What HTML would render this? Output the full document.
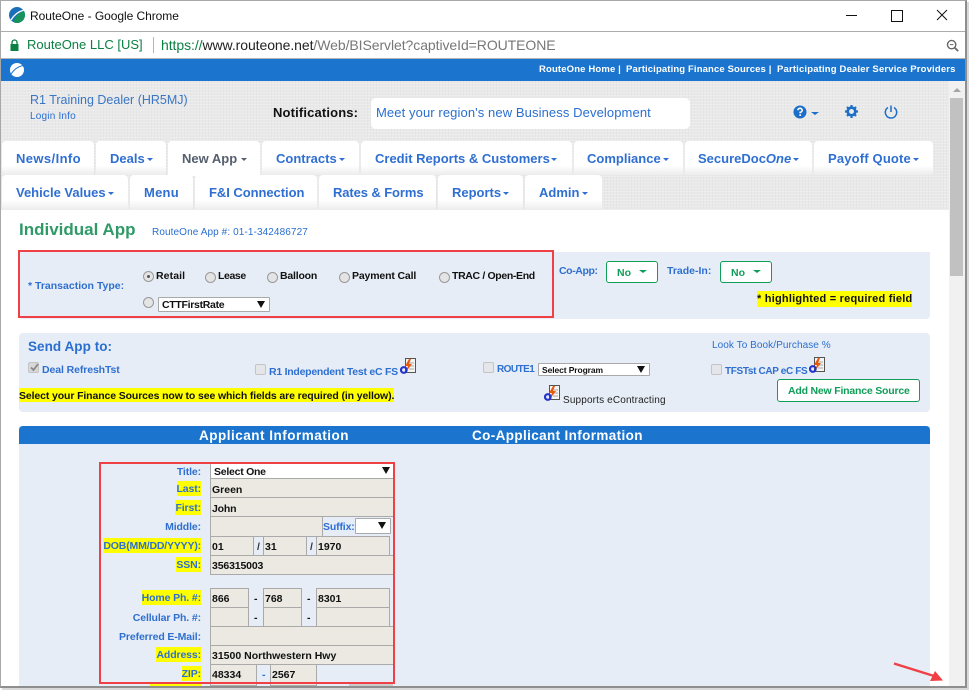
<!DOCTYPE html>
<html><head><meta charset="utf-8"><title>RouteOne</title>
<style>
html,body{margin:0;padding:0;background:#fff;}
body{width:973px;height:694px;position:relative;overflow:hidden;font-family:"Liberation Sans",sans-serif;}
div,span.a,svg{position:absolute;}
.t{position:absolute;white-space:nowrap;line-height:16px;height:16px;}
.tab{background:linear-gradient(#fff 0,#fff 72%,#ececec 100%);border-radius:4px 4px 0 0;}
.tl{position:absolute;white-space:nowrap;font:bold 13px/16px "Liberation Sans",sans-serif;color:#2f6fd2;}
.car{position:absolute;width:0;height:0;border-left:3px solid transparent;border-right:3px solid transparent;border-top:3px solid currentColor;}
.b{font-weight:bold;font-size:10.5px;color:#111;letter-spacing:-.2px;}
.lb{font-weight:bold;font-size:10.5px;color:#2e6fd0;letter-spacing:-.12px;}
.y{background:#ff0;height:15px!important;line-height:17px!important;}
.i{background:#ebe9e2;border:1px solid #aaa;box-sizing:border-box;}
.v{position:absolute;white-space:nowrap;font:bold 10.5px/16px "Liberation Sans",sans-serif;color:#111;}
.r{width:11px;height:11px;border-radius:50%;background:#e4e4e4;border:1px solid #999;box-sizing:border-box;}
.c{width:11px;height:11px;border-radius:2px;background:#e4e6ea;border:1px solid #c4c4c4;box-sizing:border-box;}
.s{background:#fff;border:1px solid #a9a9a9;box-sizing:border-box;border-radius:1px;}
.ar{position:absolute;width:0;height:0;border-left:4px solid transparent;border-right:4px solid transparent;border-top:7px solid #111;}
</style></head><body>

<!-- window chrome -->
<div style="left:2px;top:2px;width:967px;height:688px;background:#d9d9d9;"></div>
<div style="left:0;top:0;width:967px;height:688px;border:1px solid #a8a8a8;border-width:1px 2px 2px 1px;border-right-color:#8e8e8e;border-bottom-color:#8e8e8e;box-sizing:border-box;background:#fff;"></div>
<div style="left:1px;top:31px;width:964px;height:1px;background:#acacac;"></div>
<div style="left:1px;top:58px;width:964px;height:1px;background:#b4b4b4;"></div>

<svg style="left:9px;top:7px" width="16" height="16" viewBox="0 0 16 16"><circle cx="8" cy="8" r="8" fill="#1a6fb8"/><path d="M8 16A8 8 0 0 0 16 8C16 6.5 15.5 5 15 4C11 5 6 9 4.5 15C5.5 15.7 6.8 16 8 16Z" fill="#17935a"/><path d="M2 13C5 8 9 4.5 14.5 3.2" stroke="#fff" stroke-width="1.3" fill="none"/></svg>
<span class="t" style="left:30px;top:8px;font-size:12px;color:#111;letter-spacing:-.05px;">RouteOne - Google Chrome</span>

<div style="left:846px;top:15px;width:11px;height:1px;background:#111;"></div>
<div style="left:891px;top:10px;width:10px;height:10px;border:1px solid #111;"></div>
<svg style="left:936px;top:9px" width="12" height="12" viewBox="0 0 12 12"><path d="M1 1L11 11M11 1L1 11" stroke="#111" stroke-width="1" fill="none"/></svg>

<svg style="left:10px;top:39px" width="9" height="12" viewBox="0 0 9 12"><rect x="0.5" y="5" width="8" height="7" fill="#0b8043"/><path d="M2 5.5V3.5A2.5 2.5 0 0 1 7 3.5V5.5" stroke="#0b8043" stroke-width="1.3" fill="none"/></svg>
<span class="t" style="left:27px;top:37px;font-size:13px;color:#0b8043;">RouteOne LLC [US]</span>
<div style="left:153px;top:37px;width:1px;height:16px;background:#b5b5b5;"></div>
<span class="t" style="left:161px;top:37px;font-size:14px;color:#777;letter-spacing:-.07px;"><span style="color:#0b8043">https://</span><span style="color:#222">www.routeone.net</span>/Web/BIServlet?captiveId=ROUTEONE</span>
<svg style="left:946px;top:39px" width="13" height="13" viewBox="0 0 15 15"><circle cx="6.5" cy="6.5" r="4.8" stroke="#666" stroke-width="1.6" fill="none"/><path d="M10 10L14 14" stroke="#666" stroke-width="2"/><path d="M4.5 6.5H8.5" stroke="#666" stroke-width="1.2"/></svg>

<!-- blue bar -->
<div style="left:1px;top:59px;width:964px;height:22px;background:#1b75cf;"></div>
<svg style="left:10px;top:63px" width="14" height="14" viewBox="0 0 14 14"><circle cx="7" cy="7" r="7" fill="#fff"/><path d="M1 11C4 6.5 8 3.5 13 2.5" stroke="#1b75cf" stroke-width="1" fill="none"/></svg>
<span class="t" style="left:539px;top:62px;font-size:9.5px;font-weight:bold;color:#fff;letter-spacing:.15px;">RouteOne Home |</span>
<span class="t" style="left:626px;top:62px;font-size:9.5px;font-weight:bold;color:#fff;letter-spacing:.13px;">Participating Finance Sources |</span>
<span class="t" style="left:777px;top:62px;font-size:9.5px;font-weight:bold;color:#fff;letter-spacing:.17px;">Participating Dealer Service Providers</span>

<!-- texture header -->
<div style="left:1px;top:81px;width:948px;height:129px;background-color:#e9e9e9;background-image:repeating-linear-gradient(0deg,rgba(255,255,255,.22) 0 1px,transparent 1px 3px),repeating-linear-gradient(90deg,rgba(0,0,0,.02) 0 1px,transparent 1px 3px);"></div>
<span class="t" style="left:30px;top:92px;font-size:12.5px;color:#3a76c4;">R1 Training Dealer (HR5MJ)</span>
<span class="t" style="left:30px;top:109px;font-size:10px;color:#2a6fd0;letter-spacing:.2px;">Login Info</span>
<span class="t" style="left:273px;top:105px;font-size:13px;font-weight:bold;color:#111;letter-spacing:.15px;">Notifications:</span>
<div style="left:371px;top:98px;width:319px;height:31px;background:#fff;border-radius:5px;"></div>
<span class="t" style="left:376px;top:105px;font-size:13px;color:#2a6fd0;letter-spacing:.1px;">Meet your region's new Business Development</span>

<svg style="left:793px;top:105px" width="14" height="14" viewBox="0 0 14 14"><circle cx="7" cy="7" r="6.5" fill="#1b6fc8"/><path d="M4.8 5.3A2.2 2 0 1 1 7.2 7.3V8.3" stroke="#fff" stroke-width="1.6" fill="none"/><rect x="6.3" y="9.3" width="1.8" height="1.6" fill="#fff"/></svg>
<div class="car" style="left:811px;top:112px;color:#1b6fc8;border-left-width:4px;border-right-width:4px;"></div>
<svg style="left:845px;top:105px" width="13" height="13" viewBox="0 0 13 13"><circle cx="6.5" cy="6.5" r="3.8" fill="none" stroke="#1b6fc8" stroke-width="2.6"/><path d="M6.5 0V2.5M6.5 10.5V13M0 6.5H2.5M10.5 6.5H13M2 2L3.7 3.7M9.3 9.3L11 11M11 2L9.3 3.7M3.7 9.3L2 11" stroke="#1b6fc8" stroke-width="2.2"/></svg>
<svg style="left:884px;top:105px" width="14" height="14" viewBox="0 0 14 14"><path d="M4 2.5A5.7 5.7 0 1 0 10 2.5" stroke="#1b6fc8" stroke-width="1.5" fill="none"/><path d="M7 0.5V7" stroke="#1b6fc8" stroke-width="1.5"/></svg>

<!-- tabs row 1 -->
<div class="tab" style="left:2px;top:141px;width:92px;height:34px;"></div><span class="tl" style="left:16px;top:151px;letter-spacing:.4px;">News/Info</span>
<div class="tab" style="left:96px;top:141px;width:70px;height:34px;"></div><span class="tl" style="left:110px;top:151px;">Deals</span><div class="car" style="left:147px;top:158px;color:#2f6fd2;"></div>
<div class="tab" style="left:168px;top:141px;width:92px;height:35px;background:#fff;"></div><span class="tl" style="left:182px;top:151px;color:#555f6e;">New App</span><div class="car" style="left:241px;top:158px;color:#555f6e;"></div>
<div class="tab" style="left:262px;top:141px;width:97px;height:34px;"></div><span class="tl" style="left:276px;top:151px;">Contracts</span><div class="car" style="left:339px;top:158px;color:#2f6fd2;"></div>
<div class="tab" style="left:361px;top:141px;width:211px;height:34px;"></div><span class="tl" style="left:375px;top:151px;">Credit Reports &amp; Customers</span><div class="car" style="left:551px;top:158px;color:#2f6fd2;"></div>
<div class="tab" style="left:574px;top:141px;width:109px;height:34px;"></div><span class="tl" style="left:587px;top:151px;">Compliance</span><div class="car" style="left:663px;top:158px;color:#2f6fd2;"></div>
<div class="tab" style="left:685px;top:141px;width:127px;height:34px;"></div><span class="tl" style="left:698px;top:151px;">SecureDoc<i>One</i></span><div class="car" style="left:793px;top:158px;color:#2f6fd2;"></div>
<div class="tab" style="left:814px;top:141px;width:119px;height:34px;"></div><span class="tl" style="left:828px;top:151px;letter-spacing:.17px;">Payoff Quote</span><div class="car" style="left:913px;top:158px;color:#2f6fd2;"></div>
<!-- tabs row 2 -->
<div class="tab" style="left:2px;top:175px;width:126px;height:35px;"></div><span class="tl" style="left:16px;top:185px;">Vehicle Values</span><div class="car" style="left:108px;top:192px;color:#2f6fd2;"></div>
<div class="tab" style="left:130px;top:175px;width:63px;height:35px;"></div><span class="tl" style="left:144px;top:185px;letter-spacing:.25px;">Menu</span>
<div class="tab" style="left:195px;top:175px;width:122px;height:35px;"></div><span class="tl" style="left:209px;top:185px;letter-spacing:-.05px;">F&amp;I Connection</span>
<div class="tab" style="left:319px;top:175px;width:117px;height:35px;"></div><span class="tl" style="left:333px;top:185px;letter-spacing:-.1px;">Rates &amp; Forms</span>
<div class="tab" style="left:438px;top:175px;width:85px;height:35px;"></div><span class="tl" style="left:452px;top:185px;">Reports</span><div class="car" style="left:503px;top:192px;color:#2f6fd2;"></div>
<div class="tab" style="left:525px;top:175px;width:77px;height:35px;"></div><span class="tl" style="left:539px;top:185px;">Admin</span><div class="car" style="left:582px;top:192px;color:#2f6fd2;"></div>

<!-- scrollbar -->
<div style="left:949px;top:81px;width:16px;height:605px;background:#f1f1f1;"></div>
<div style="left:950px;top:98px;width:13px;height:178px;background:#c1c1c1;"></div>
<div style="left:953px;top:88px;width:0;height:0;border-left:4px solid transparent;border-right:4px solid transparent;border-bottom:4px solid #a5a5a5;"></div>

<!-- page heading -->
<span class="t" style="left:19px;top:222px;font-size:17px;font-weight:bold;color:#2f9a68;">Individual App</span>
<span class="t" style="left:152px;top:225px;font-size:10px;color:#2a6fd0;letter-spacing:.1px;">RouteOne App #: 01-1-342486727</span>

<!-- transaction panel -->
<div style="left:19px;top:252px;width:911px;height:67px;background:#e6edf6;border-radius:0 0 4px 4px;"></div>
<div style="left:18px;top:250px;width:536px;height:68px;border:2px solid #f04045;box-sizing:border-box;"></div>
<span class="t lb" style="left:28px;top:278px;letter-spacing:0;">* Transaction Type:</span>
<div class="r" style="left:143px;top:271px;"><div style="left:3px;top:3px;width:3px;height:3px;border-radius:50%;background:#555;"></div></div>
<span class="t b" style="left:156px;top:268px;letter-spacing:.1px;">Retail</span>
<div class="r" style="left:205px;top:272px;"></div><span class="t b" style="left:218px;top:268px;letter-spacing:-.4px;">Lease</span>
<div class="r" style="left:267px;top:272px;"></div><span class="t b" style="left:280px;top:268px;">Balloon</span>
<div class="r" style="left:339px;top:272px;"></div><span class="t b" style="left:352px;top:268px;letter-spacing:-.15px;">Payment Call</span>
<div class="r" style="left:439px;top:272px;"></div><span class="t b" style="left:452px;top:268px;letter-spacing:-.35px;">TRAC / Open-End</span>
<div class="r" style="left:143px;top:297px;"></div>
<div class="s" style="left:158px;top:297px;width:112px;height:15px;"></div>
<span class="t b" style="left:162px;top:297px;letter-spacing:-.3px;">CTTFirstRate</span><div class="ar" style="left:257px;top:301px;"></div>

<span class="t lb" style="left:559px;top:263px;letter-spacing:-.4px;">Co-App:</span>
<div style="left:606px;top:261px;width:52px;height:22px;border:1px solid #0f9d58;border-radius:3px;box-sizing:border-box;background:#fff;"></div>
<span class="t" style="left:617px;top:265px;font-size:10.5px;font-weight:bold;color:#0f9d58;">No</span>
<div class="car" style="left:639px;top:270px;color:#0f9d58;border-left-width:4px;border-right-width:4px;"></div>
<span class="t lb" style="left:667px;top:263px;letter-spacing:0;">Trade-In:</span>
<div style="left:720px;top:261px;width:52px;height:22px;border:1px solid #0f9d58;border-radius:3px;box-sizing:border-box;background:#fff;"></div>
<span class="t" style="left:731px;top:265px;font-size:10.5px;font-weight:bold;color:#0f9d58;">No</span>
<div class="car" style="left:753px;top:270px;color:#0f9d58;border-left-width:4px;border-right-width:4px;"></div>
<span class="t" style="left:757px;top:291px;font-size:11px;font-weight:bold;color:#111;letter-spacing:.22px;background:#ff0;">* highlighted = required field</span>

<!-- send app panel -->
<div style="left:19px;top:333px;width:911px;height:79px;background:#e6edf6;border-radius:4px;"></div>
<span class="t" style="left:28px;top:339px;font-size:13.5px;font-weight:bold;color:#2a6fd0;letter-spacing:.05px;">Send App to:</span>
<div class="c" style="left:28px;top:362px;background:#d8d8d8;"></div>
<svg style="left:30px;top:363px" width="9" height="9" viewBox="0 0 9 9"><path d="M1 4.5L3.5 7L8 1" stroke="#888" stroke-width="1.8" fill="none"/></svg>
<span class="t lb" style="left:42px;top:362px;letter-spacing:-.1px;">Deal RefreshTst</span>
<div class="c" style="left:255px;top:364px;"></div>
<span class="t lb" style="left:269px;top:364px;letter-spacing:-.25px;">R1 Independent Test eC FS</span>
<svg style="left:400px;top:358px" width="16" height="17" viewBox="0 0 16 17"><rect x="5.5" y="0.5" width="10" height="14" fill="#f4f4f4" stroke="#555"/><path d="M9 5H14M9 8H14M9 11H14" stroke="#aaa"/><path d="M9 1L5 8H8L5 15L12 6H9L11 1Z" fill="#e8590c"/><circle cx="3.8" cy="12" r="2.8" fill="none" stroke="#2433c9" stroke-width="2.2"/></svg>
<div class="c" style="left:483px;top:362px;"></div>
<span class="t lb" style="left:497px;top:362px;font-size:10px;letter-spacing:-.55px;">ROUTE1</span>
<div class="s" style="left:538px;top:363px;width:112px;height:13px;"></div>
<span class="t" style="left:542px;top:362px;font-size:8.5px;font-weight:bold;color:#111;letter-spacing:-.1px;">Select Program</span><div class="ar" style="left:637px;top:366px;"></div>
<svg style="left:544px;top:385px" width="16" height="17" viewBox="0 0 16 17"><rect x="5.5" y="0.5" width="10" height="14" fill="#f4f4f4" stroke="#555"/><path d="M9 5H14M9 8H14M9 11H14" stroke="#aaa"/><path d="M9 1L5 8H8L5 15L12 6H9L11 1Z" fill="#e8590c"/><circle cx="3.8" cy="12" r="2.8" fill="none" stroke="#2433c9" stroke-width="2.2"/></svg>
<span class="t" style="left:563px;top:393px;font-size:10px;color:#222;letter-spacing:.15px;">Supports eContracting</span>
<span class="t" style="left:712px;top:338px;font-size:10px;color:#2a6fd0;letter-spacing:.07px;">Look To Book/Purchase %</span>
<div class="c" style="left:711px;top:364px;"></div>
<span class="t lb" style="left:725px;top:364px;font-size:10px;letter-spacing:-.35px;">TFSTst CAP eC FS</span>
<svg style="left:809px;top:357px" width="16" height="17" viewBox="0 0 16 17"><rect x="5.5" y="0.5" width="10" height="14" fill="#f4f4f4" stroke="#555"/><path d="M9 5H14M9 8H14M9 11H14" stroke="#aaa"/><path d="M9 1L5 8H8L5 15L12 6H9L11 1Z" fill="#e8590c"/><circle cx="3.8" cy="12" r="2.8" fill="none" stroke="#2433c9" stroke-width="2.2"/></svg>
<div style="left:777px;top:379px;width:143px;height:23px;border:1px solid #0f9d58;border-radius:3px;box-sizing:border-box;background:#fff;"></div>
<span class="t" style="left:788px;top:383px;font-size:10.5px;font-weight:bold;color:#0f9d58;letter-spacing:-.2px;">Add New Finance Source</span>
<span class="t" style="left:19px;top:388px;font-size:10.5px;font-weight:bold;color:#111;height:14px;line-height:16px;letter-spacing:-.12px;background:#ff0;">Select your Finance Sources now to see which fields are required (in yellow).</span>

<!-- applicant panel -->
<div style="left:19px;top:426px;width:911px;height:260px;background:#e6edf6;"></div>
<div style="left:19px;top:426px;width:911px;height:18px;background:#1b75cf;border-radius:4px 4px 0 0;"></div>
<span class="t" style="left:199px;top:428px;font-size:13.5px;font-weight:bold;color:#fff;letter-spacing:.5px;">Applicant Information</span>
<span class="t" style="left:472px;top:428px;font-size:13.5px;font-weight:bold;color:#fff;letter-spacing:.37px;">Co-Applicant Information</span>

<!-- form cells -->
<div class="s" style="left:210px;top:464px;width:184px;height:15px;border-width:0 0 1px 1px;"></div>
<span class="v" style="left:214px;top:464px;letter-spacing:-.25px;">Select One</span><div class="ar" style="left:382px;top:467px;"></div>
<div class="i" style="left:210px;top:478px;width:184px;height:20px;"></div><span class="v" style="left:212px;top:482px;">Green</span>
<div class="i" style="left:210px;top:497px;width:184px;height:20px;"></div><span class="v" style="left:212px;top:501px;letter-spacing:-.2px;">John</span>
<div class="i" style="left:210px;top:516px;width:113px;height:21px;"></div>
<span class="t lb" style="left:323px;top:519px;letter-spacing:-.15px;">Suffix:</span>
<div class="s" style="left:355px;top:518px;width:36px;height:16px;"></div><div class="ar" style="left:378px;top:522px;"></div>
<div class="i" style="left:210px;top:536px;width:44px;height:20px;"></div><span class="v" style="left:212px;top:539px;">01</span>
<span class="v" style="left:257px;top:539px;color:#333;">/</span>
<div class="i" style="left:263px;top:536px;width:44px;height:20px;"></div><span class="v" style="left:265px;top:539px;">31</span>
<span class="v" style="left:310px;top:539px;color:#333;">/</span>
<div class="i" style="left:316px;top:536px;width:74px;height:20px;"></div><span class="v" style="left:318px;top:539px;">1970</span>
<div class="i" style="left:210px;top:555px;width:184px;height:20px;"></div><span class="v" style="left:212px;top:558px;letter-spacing:-.15px;">356315003</span>

<div class="i" style="left:210px;top:588px;width:39px;height:20px;"></div><span class="v" style="left:212px;top:591px;">866</span>
<span class="v" style="left:254px;top:591px;">-</span>
<div class="i" style="left:263px;top:588px;width:39px;height:20px;"></div><span class="v" style="left:265px;top:591px;">768</span>
<span class="v" style="left:307px;top:591px;">-</span>
<div class="i" style="left:316px;top:588px;width:74px;height:20px;"></div><span class="v" style="left:318px;top:591px;">8301</span>
<div class="i" style="left:210px;top:607px;width:39px;height:20px;"></div>
<span class="v" style="left:254px;top:610px;">-</span>
<div class="i" style="left:263px;top:607px;width:39px;height:20px;"></div>
<span class="v" style="left:307px;top:610px;">-</span>
<div class="i" style="left:316px;top:607px;width:74px;height:20px;"></div>
<div class="i" style="left:210px;top:626px;width:184px;height:20px;"></div>
<div class="i" style="left:210px;top:645px;width:184px;height:20px;"></div><span class="v" style="left:212px;top:648px;">31500 Northwestern Hwy</span>
<div class="i" style="left:210px;top:664px;width:47px;height:22px;"></div><span class="v" style="left:212px;top:667px;">48334</span>
<span class="v" style="left:262px;top:667px;color:#2a6fd0;">-</span>
<div class="i" style="left:270px;top:664px;width:47px;height:22px;"></div><span class="v" style="left:272px;top:667px;">2567</span>
<div style="left:316px;top:664px;width:77px;height:1px;background:#aaa;"></div>
<div style="left:149px;top:684px;width:52px;height:2px;background:#ff0;"></div>
<div style="left:349px;top:684px;width:44px;height:2px;background:#ccc;"></div>

<!-- labels -->
<span class="t lb" style="right:772px;top:464px;">Title:</span>
<span class="t lb y" style="right:772px;top:481px;">Last:</span>
<span class="t lb y" style="right:772px;top:500px;">First:</span>
<span class="t lb" style="right:772px;top:519px;">Middle:</span>
<span class="t lb y" style="right:772px;top:538px;letter-spacing:-.17px;">DOB(MM/DD/YYYY):</span>
<span class="t lb y" style="right:772px;top:557px;">SSN:</span>
<span class="t lb y" style="right:772px;top:590px;">Home Ph. #:</span>
<span class="t lb" style="right:772px;top:610px;">Cellular Ph. #:</span>
<span class="t lb" style="right:772px;top:629px;">Preferred E-Mail:</span>
<span class="t lb y" style="right:772px;top:647px;">Address:</span>
<span class="t lb y" style="right:772px;top:666px;">ZIP:</span>

<div style="left:99px;top:462px;width:296px;height:222px;border:2px solid #f04045;box-sizing:border-box;"></div>

<!-- arrow -->
<svg style="left:890px;top:660px" width="58" height="24" viewBox="0 0 58 24"><path d="M4 3.5L44 16" stroke="#f04045" stroke-width="2.4"/><path d="M53 20.5L40 21L45 11Z" fill="#f04045"/></svg>
</body></html>
